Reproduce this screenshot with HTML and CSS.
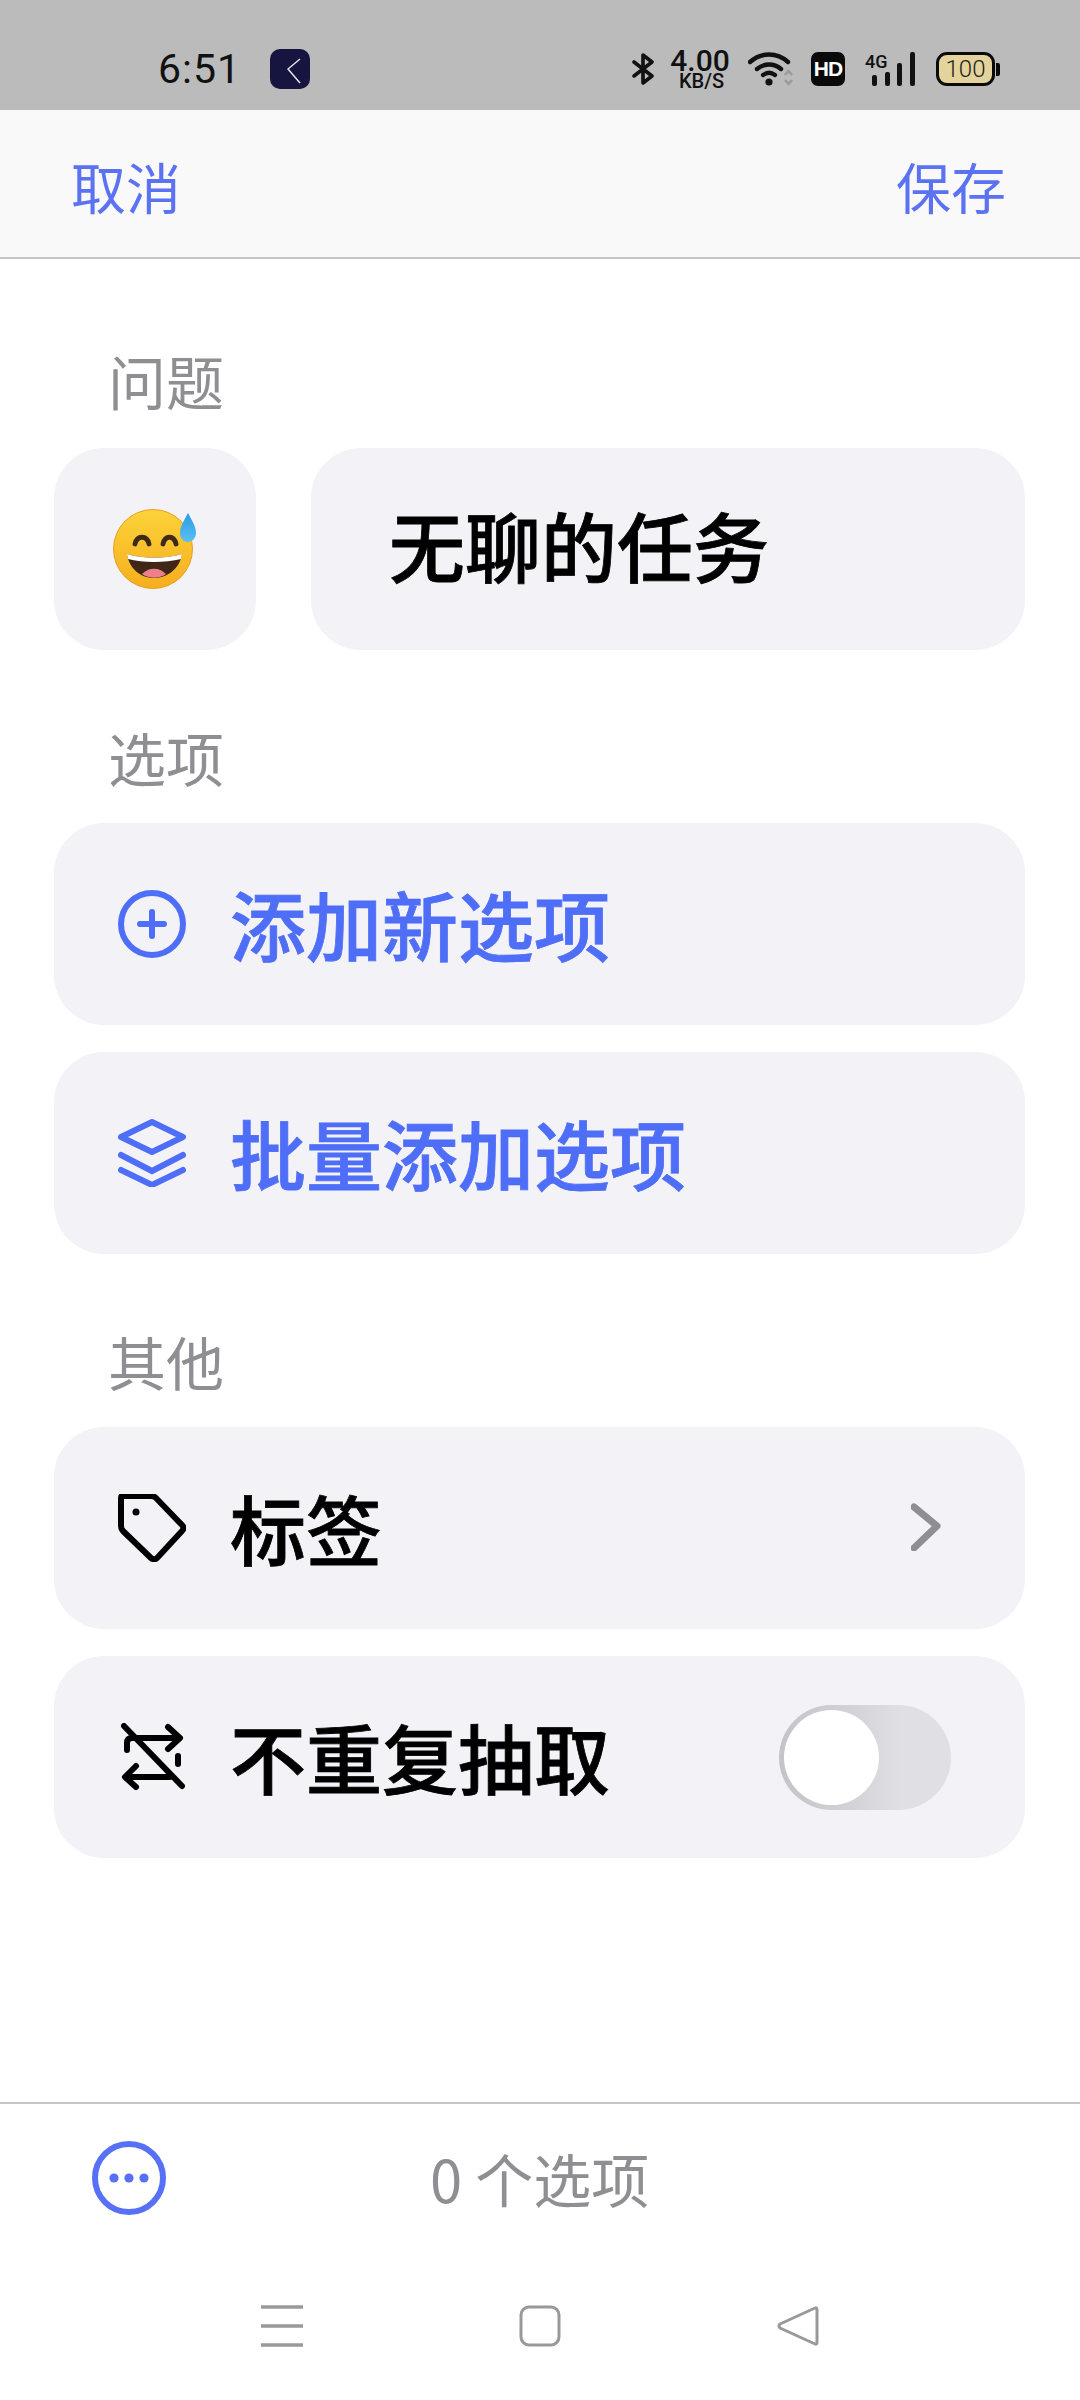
FILE: index.html
```html
<!DOCTYPE html>
<html lang="zh-CN">
<head>
    <meta charset="UTF-8">
    <meta name="viewport" content="width=device-width, initial-scale=1.0">
    <title>添加问题</title>
    <link rel="stylesheet" href="styles.css">
</head>
<body>
    <div class="status-bar">
        <span class="time">6:51</span>
        <span class="app-badge">
            <svg width="40" height="40" viewBox="0 0 40 40"><path d="M30 10 L18 20 L30 34" fill="none" stroke="#e8e8f0" stroke-width="1.4"/></svg>
        </span>
        <div class="status-right">
            <svg class="bt-icon" width="26" height="32" viewBox="0 0 26 32"><path d="M3 9 L21 23 L12 30 V2 L21 9 L3 23" fill="none" stroke="#111" stroke-width="3.6" stroke-linejoin="round" stroke-linecap="round"/></svg>
            <div class="speed">
                <span class="speed-num">4.00</span>
                <span class="speed-unit">KB/S</span>
            </div>
            <svg class="wifi-icon" width="46" height="34" viewBox="0 0 46 34">
                <path d="M2 10 C13 0 29 0 40 10" fill="none" stroke="#111" stroke-width="4.4" stroke-linecap="round"/>
                <path d="M9 17 C16 11 26 11 33 17" fill="none" stroke="#111" stroke-width="4.4" stroke-linecap="round"/>
                <path d="M15 23 C19 20 23 20 27 23" fill="none" stroke="#111" stroke-width="4.2" stroke-linecap="round"/>
                <circle cx="21" cy="30" r="3.6" fill="#111"/>
                <path d="M37 23 L40.500 19 L44 23 M37 28 L40.500 32 L44 28" fill="none" stroke="#999" stroke-width="2.400"/>
            </svg>
            <span class="hd-badge">HD</span>
            <svg class="signal-icon" width="50" height="34" viewBox="0 0 50 34">
                <text x="0" y="16" class="signal-text">4G</text>
                <rect x="7" y="23" width="5" height="11" rx="2" fill="#111"/>
                <rect x="20" y="20" width="5" height="14" rx="2" fill="#111"/>
                <rect x="32" y="11" width="5" height="23" rx="2" fill="#111"/>
                <rect x="45" y="0" width="5" height="34" rx="2" fill="#111"/>
            </svg>
            <div class="battery">
                <span class="battery-body">100</span>
                <span class="battery-nub"></span>
            </div>
        </div>
    </div>

    <div class="nav-bar">
        <span class="nav-link">取消</span>
        <span class="nav-link">保存</span>
    </div>

    <main class="content">
        <div class="section-label first-label">问题</div>
        <div class="question-row">
            <div class="card emoji-card">
                <svg class="emoji" width="84" height="84" viewBox="0 0 84 84">
                    <defs>
                        <linearGradient id="faceFill" x1="0" y1="0" x2="0" y2="1">
                            <stop offset="0" stop-color="#fcd33a"/>
                            <stop offset="1" stop-color="#f6ae1e"/>
                        </linearGradient>
                        <linearGradient id="dropFill" x1="0" y1="0" x2="0" y2="1">
                            <stop offset="0" stop-color="#2a9be4"/>
                            <stop offset="1" stop-color="#5cc0f2"/>
                        </linearGradient>
                    </defs>
                    <circle cx="40" cy="44" r="39.500" fill="url(#faceFill)" stroke="#eb9d1f" stroke-width="1"/>
                    <path d="M22 39 C24 30 34 30 36 39" fill="none" stroke="#3d2a18" stroke-width="4.800" stroke-linecap="round"/>
                    <path d="M50 39 C52 30 61 30 63 39" fill="none" stroke="#3d2a18" stroke-width="4.800" stroke-linecap="round"/>
                    <path d="M14 49 C30 54 52 54 69 49 C67 63 55 73 41 73 C27 73 16 63 14 49 Z" fill="#3f2616"/>
                    <path d="M14 49 C30 54 52 54 69 49 L68 54 C52 58 30 58 15 54 Z" fill="#fff"/>
                    <path d="M29 69 C36 62 46 62 53 69 C46 74 36 74 29 69 Z" fill="#ec7f8b"/>
                    <path d="M75 8 C79 16 83 21 83 28 C83 33 79 37 75 37 C70 37 67 33 67 28 C67 21 71 16 75 8 Z" fill="url(#dropFill)"/>
                </svg>
            </div>
            <div class="card title-card">无聊的任务</div>
        </div>

        <div class="section-label">选项</div>
        <div class="card-group">
            <div class="card row-card accent">
                <svg class="row-icon" width="68" height="68" viewBox="0 0 68 68">
                    <circle cx="34" cy="34" r="31" fill="none" stroke="currentColor" stroke-width="6"/>
                    <path d="M34 22 V46 M22 34 H46" fill="none" stroke="currentColor" stroke-width="6" stroke-linecap="round"/>
                </svg>
                <span class="row-text">添加新选项</span>
            </div>
            <div class="card row-card accent">
                <svg class="row-icon" width="68" height="68" viewBox="0 0 68 68">
                    <path d="M34 3 L65 18 L34 33 L3 18 Z" fill="none" stroke="currentColor" stroke-width="6" stroke-linejoin="round"/>
                    <path d="M3 36 L34 52 L65 36" fill="none" stroke="currentColor" stroke-width="6" stroke-linecap="round"/>
                    <path d="M3 51 L34 66 L65 51" fill="none" stroke="currentColor" stroke-width="6" stroke-linecap="round"/>
                </svg>
                <span class="row-text">批量添加选项</span>
            </div>
        </div>

        <div class="section-label">其他</div>
        <div class="card-group">
            <div class="card row-card">
                <svg class="row-icon" width="68" height="68" viewBox="0 0 68 68">
                    <path d="M3 4 Q3 2 5 2 L33 2 Q36 2 38 4 L64 31 Q67 34 64 37 L40 63 Q37 67 33 64 L5 37 Q3 35 3 32 Z" fill="none" stroke="#000" stroke-width="6" stroke-linejoin="round"/>
                    <circle cx="18" cy="18" r="3.500" fill="#000"/>
                </svg>
                <span class="row-text">标签</span>
                <svg class="chevron" width="30" height="48" viewBox="0 0 30 48"><path d="M3 4 L26 23 L3 45" fill="none" stroke="#8e8e93" stroke-width="7" stroke-linecap="round" stroke-linejoin="round"/></svg>
            </div>
            <div class="card row-card">
                <svg class="row-icon" width="68" height="68" viewBox="0 0 68 68">
                    <path d="M6 3 L64 63" fill="none" stroke="#000" stroke-width="6" stroke-linecap="round"/>
                    <path d="M9 27 V20 Q9 15 14 15 H60 M50 4 L62 15 L50 26" fill="none" stroke="#000" stroke-width="6" stroke-linecap="round" stroke-linejoin="round"/>
                    <path d="M60 33 V41 M52 54 H8 M18 43 L7 54 L18 64" fill="none" stroke="#000" stroke-width="6" stroke-linecap="round" stroke-linejoin="round"/>
                </svg>
                <span class="row-text">不重复抽取</span>
                <div class="toggle"><span class="toggle-knob"></span></div>
            </div>
        </div>
    </main>

    <div class="bottom-bar">
        <svg class="more-icon" width="74" height="74" viewBox="0 0 74 74">
            <circle cx="37" cy="37" r="34" fill="none" stroke="#5770f5" stroke-width="6"/>
            <circle cx="22" cy="37" r="4.600" fill="#5770f5"/>
            <circle cx="37" cy="37" r="4.600" fill="#5770f5"/>
            <circle cx="52" cy="37" r="4.600" fill="#5770f5"/>
        </svg>
        <span class="count-text">0 个选项</span>
    </div>

    <div class="system-nav">
        <svg width="42" height="42" viewBox="0 0 42 42"><path d="M0 2 H42 M0 21 H42 M0 40 H42" stroke="#999" stroke-width="3.400"/></svg>
        <svg width="42" height="42" viewBox="0 0 42 42"><rect x="2" y="2" width="38" height="38" rx="8" fill="none" stroke="#999" stroke-width="3"/></svg>
        <svg width="42" height="42" viewBox="0 0 42 42"><path d="M38 3 Q40 2 40 5 V37 Q40 40 38 39 L3 23 Q1 21 3 19 Z" fill="none" stroke="#999" stroke-width="3" stroke-linejoin="round"/></svg>
    </div>
</body>
</html>
```

FILE: styles.css
```css
* {
    box-sizing: border-box;
}

body {
    margin: 0;
    width: 1080px;
    height: 2400px;
    display: flex;
    flex-direction: column;
    background: #fff;
    font-family: "Noto Sans CJK SC", "Noto Sans", sans-serif;
    overflow: hidden;
}

.status-bar {
    height: 110px;
    flex-shrink: 0;
    display: flex;
    align-items: center;
    padding: 28px 80px 0 158px;
    background: #bbbbbb;
    color: #111;
}

.time {
    font-family: Roboto, sans-serif;
    font-size: 41px;
    letter-spacing: 1px;
    line-height: 48px;
}

.app-badge {
    width: 40px;
    height: 40px;
    margin-left: 29px;
    border-radius: 10px;
    background: #15153f;
    display: flex;
}

.status-right {
    margin-left: auto;
    display: flex;
    align-items: center;
    height: 40px;
}

.bt-icon {
    margin-right: 13px;
}

.speed {
    width: 60px;
    display: flex;
    flex-direction: column;
    align-items: center;
    font-family: Roboto, sans-serif;
    font-weight: 500;
    margin-right: 18px;
}

.speed-num {
    font-size: 30px;
    line-height: 24px;
}

.speed-unit {
    font-size: 20px;
    line-height: 16px;
    padding-left: 3px;
}

.wifi-icon {
    margin-right: 17px;
}

.hd-badge {
    width: 34px;
    height: 34px;
    border-radius: 7px;
    background: #0a0a0a;
    color: #fff;
    font-family: "Liberation Sans", sans-serif;
    font-weight: 700;
    font-size: 21px;
    line-height: 34px;
    text-align: center;
    margin-right: 20px;
    letter-spacing: -1px;
}

.signal-icon {
    margin-right: 21px;
}

.signal-text {
    font-family: Roboto, sans-serif;
    font-weight: 500;
    font-size: 18px;
    fill: #111;
}

.battery {
    display: flex;
    align-items: center;
}

.battery-body {
    width: 59px;
    height: 34px;
    border: 3px solid #0a0a0a;
    border-radius: 11px;
    background: #e4d39b;
    font-family: Roboto, sans-serif;
    font-weight: 300;
    font-size: 24px;
    line-height: 28px;
    text-align: center;
    color: #222;
}

.battery-nub {
    width: 4px;
    height: 13px;
    margin-left: 1px;
    border-radius: 0 2px 2px 0;
    background: #0a0a0a;
}

.nav-bar {
    height: 149px;
    flex-shrink: 0;
    display: flex;
    justify-content: space-between;
    align-items: center;
    padding: 3px 74px 0 71px;
    background: #f9f9f9;
    border-bottom: 2px solid #c6c6c8;
}

.nav-link {
    color: #5b72f2;
    font-size: 55px;
    line-height: 64px;
}

.content {
    flex: 1;
    padding: 0 55px 0 54px;
}

.section-label {
    height: 173px;
    padding: 75px 0 0 54px;
    color: #8e8e93;
    font-size: 58px;
    line-height: 64px;
}

.first-label {
    height: 189px;
    padding-top: 89px;
}

.card-group {
    display: flex;
    flex-direction: column;
    gap: 27px;
}

.card {
    background: #f2f2f7;
    border-radius: 50px;
    height: 202px;
}

.question-row {
    display: flex;
    gap: 55px;
}

.emoji-card {
    width: 202px;
    flex-shrink: 0;
    display: flex;
    justify-content: center;
    align-items: center;
}

.emoji {
    margin: 0 0 5px 0;
}

.title-card {
    flex: 1;
    padding-left: 78px;
    font-size: 76px;
    font-weight: 500;
    -webkit-text-stroke: 0.8px #000;
    line-height: 192px;
    color: #000;
}

.row-card {
    display: flex;
    align-items: center;
    padding: 0 74px 0 64px;
    color: #000;
}

.accent {
    color: #4f6ef7;
}

.row-icon {
    flex-shrink: 0;
    margin-right: 44px;
}

.row-text {
    font-size: 76px;
    font-weight: 500;
    -webkit-text-stroke: 0.8px currentColor;
    line-height: 90px;
    margin-top: -3px;
}

.chevron {
    margin-left: auto;
    margin-right: 10px;
    margin-top: -2px;
}

.toggle {
    margin-left: auto;
    width: 172px;
    height: 105px;
    padding: 5px;
    border-radius: 53px;
    background: linear-gradient(90deg, #c4c4c8 0%, #d4d4d8 45%, #dfdfe4 70%);
}

.toggle-knob {
    display: block;
    width: 95px;
    height: 95px;
    border-radius: 50%;
    background: #fff;
}

.bottom-bar {
    height: 150px;
    flex-shrink: 0;
    display: flex;
    align-items: center;
    padding-left: 92px;
    border-top: 2px solid #c6c6c8;
}

.more-icon {
    margin-right: 264px;
}

.count-text {
    color: #8e8e93;
    font-size: 58px;
    line-height: 64px;
}

.system-nav {
    height: 148px;
    flex-shrink: 0;
    display: flex;
    justify-content: space-between;
    padding: 53px 261px 0 261px;
}
```
